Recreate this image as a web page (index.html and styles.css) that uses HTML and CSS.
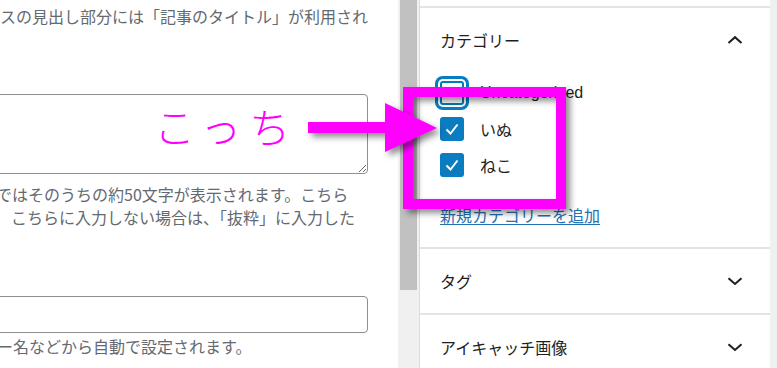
FILE: index.html
```
<!DOCTYPE html>
<html lang="ja">
<head>
<meta charset="utf-8">
<title>投稿の編集</title>
<link rel="stylesheet" href="styles.css">
</head>
<body>
<div class="screen">
  <main class="editor">
    <p class="help l1">スの見出し部分には「記事のタイトル」が利用され</p>
    <textarea class="excerpt"></textarea>
    <p class="help l2">ではそのうちの約50文字が表示されます。こちら</p>
    <p class="help l3">こちらに入力しない場合は、「抜粋」に入力した</p>
    <input class="field" type="text">
    <p class="help l4">ー名などから自動で設定されます。</p>
  </main>

  <div class="scrollbar"><div class="thumb"></div></div>

  <aside class="sidebar">
    <section class="panel">
      <div class="panel-head">
        <span>カテゴリー</span>
        <svg class="chev" width="16" height="10" viewBox="0 0 16 10"><polyline points="1.5,8 8,2.2 14.5,8" fill="none" stroke="#1e1e1e" stroke-width="2"/></svg>
      </div>
      <ul class="cats">
        <li><span class="cb focus"></span><span>Uncategorized</span></li>
        <li><span class="cb checked"><svg viewBox="0 0 24 24" width="24" height="24"><polyline points="6.5,12.5 10.5,16.5 17.5,7.5" fill="none" stroke="#fff" stroke-width="2"/></svg></span><span>いぬ</span></li>
        <li><span class="cb checked"><svg viewBox="0 0 24 24" width="24" height="24"><polyline points="6.5,12.5 10.5,16.5 17.5,7.5" fill="none" stroke="#fff" stroke-width="2"/></svg></span><span>ねこ</span></li>
      </ul>
      <a class="add" href="#">新規カテゴリーを追加</a>
    </section>
    <section class="panel">
      <div class="panel-head">
        <span>タグ</span>
        <svg class="chev" width="16" height="10" viewBox="0 0 16 10"><polyline points="1.5,2.2 8,8 14.5,2.2" fill="none" stroke="#1e1e1e" stroke-width="2"/></svg>
      </div>
    </section>
    <section class="panel">
      <div class="panel-head">
        <span>アイキャッチ画像</span>
        <svg class="chev" width="16" height="10" viewBox="0 0 16 10"><polyline points="1.5,2.2 8,8 14.5,2.2" fill="none" stroke="#1e1e1e" stroke-width="2"/></svg>
      </div>
    </section>
  </aside>

  <div class="edge"></div>

  <div class="note-text">こっち</div>
  <div class="note-box"></div>
  <svg class="note-arrow" width="140" height="60" viewBox="0 0 140 60">
    <rect x="0" y="19" width="79" height="11" fill="#ff00ff"/>
    <polygon points="77,0 77,49 129,25" fill="#ff00ff"/>
  </svg>
</div>
</body>
</html>
```

FILE: styles.css
```
* { box-sizing: border-box; }
html, body { margin: 0; padding: 0; }
body {
  width: 777px;
  height: 368px;
  overflow: hidden;
  background: #fff;
  font-family: "Liberation Sans", "Noto Sans CJK JP", sans-serif;
}
.screen {
  position: relative;
  display: flex;
  height: 368px;
}

/* left editor column */
.editor {
  width: 398px;
  flex: none;
  overflow: hidden;
  display: flex;
  flex-direction: column;
  color: #646970;
  font-family: "Noto Sans CJK JP", sans-serif;
  font-size: 16px;
}
.help {
  margin: 0;
  white-space: nowrap;
  line-height: 23px;
}
.l1 { margin-top: 5px; margin-left: 0; }
.excerpt {
  display: block;
  margin-top: 66px;
  margin-left: -20px;
  width: 388px;
  height: 80px;
  flex: none;
  border: 1px solid #8c8f94;
  border-radius: 4px;
  background: #fff;
  resize: both;
}
.l2 { margin-top: 9px; margin-left: -4px; }
.l3 { margin-left: 11px; }
.field {
  display: block;
  margin-top: 67px;
  margin-left: -20px;
  width: 388px;
  height: 37px;
  flex: none;
  border: 1px solid #8c8f94;
  border-radius: 4px;
  background: #fff;
}
.l4 { margin-top: 2px; margin-left: -3px; }

/* scrollbar */
.scrollbar {
  width: 22px;
  flex: none;
  background: #f0f0f0;
  border-right: 1px solid #dcdcdc;
  padding-left: 2px;
}
.thumb {
  width: 17px;
  height: 290px;
  background: #c1c1c1;
}

/* sidebar */
.sidebar {
  width: 350px;
  flex: none;
  padding-top: 6px;
  color: #1e1e1e;
  font-size: 16px;
}
.panel {
  border-top: 2px solid #e4e4e4;
}
.panel:first-child { padding-bottom: 18px; }
.panel-head {
  height: 64px;
  display: flex;
  align-items: center;
  justify-content: space-between;
  padding: 0 27px 0 20px;
}
.chev { display: block; }
.cats {
  list-style: none;
  margin: 0;
  padding: 3px 0 0 20px;
}
.cats li {
  height: 36px;
  display: flex;
  align-items: center;
  gap: 16px;
}
.cb {
  width: 24px;
  height: 24px;
  flex: none;
  border-radius: 3px;
  display: block;
}
.cb svg { display: block; }
.cb.focus {
  border: 2px solid #007cba;
  background: #fff;
  box-shadow: 0 0 0 2px #fff, 0 0 0 5px #0a7cc0;
  border-radius: 3px;
}
.cb.checked {
  background: #0a7cc0;
}
.add {
  display: block;
  margin: 22px 0 0 20px;
  line-height: 24px;
  color: #2271b1;
  text-decoration: underline;
  text-underline-offset: 2px;
}

.edge {
  width: 7px;
  flex: none;
  background: #f0f0f0;
}

/* annotation overlay */
.note-text {
  position: absolute;
  left: 154px;
  top: 101px;
  font-family: "Noto Sans CJK JP", sans-serif;
  font-weight: 300;
  font-size: 41px;
  line-height: 48px;
  letter-spacing: 8px;
  color: #ff00ff;
  white-space: nowrap;
}
.note-box {
  position: absolute;
  left: 403px;
  top: 87px;
  width: 163px;
  height: 122px;
  border: 10px solid #ff00ff;
  filter: drop-shadow(4px 4px 3px rgba(0, 0, 0, 0.45));
}
.note-arrow {
  position: absolute;
  left: 308px;
  top: 103px;
  overflow: visible;
  filter: drop-shadow(4px 4px 3px rgba(0, 0, 0, 0.45));
}
```
